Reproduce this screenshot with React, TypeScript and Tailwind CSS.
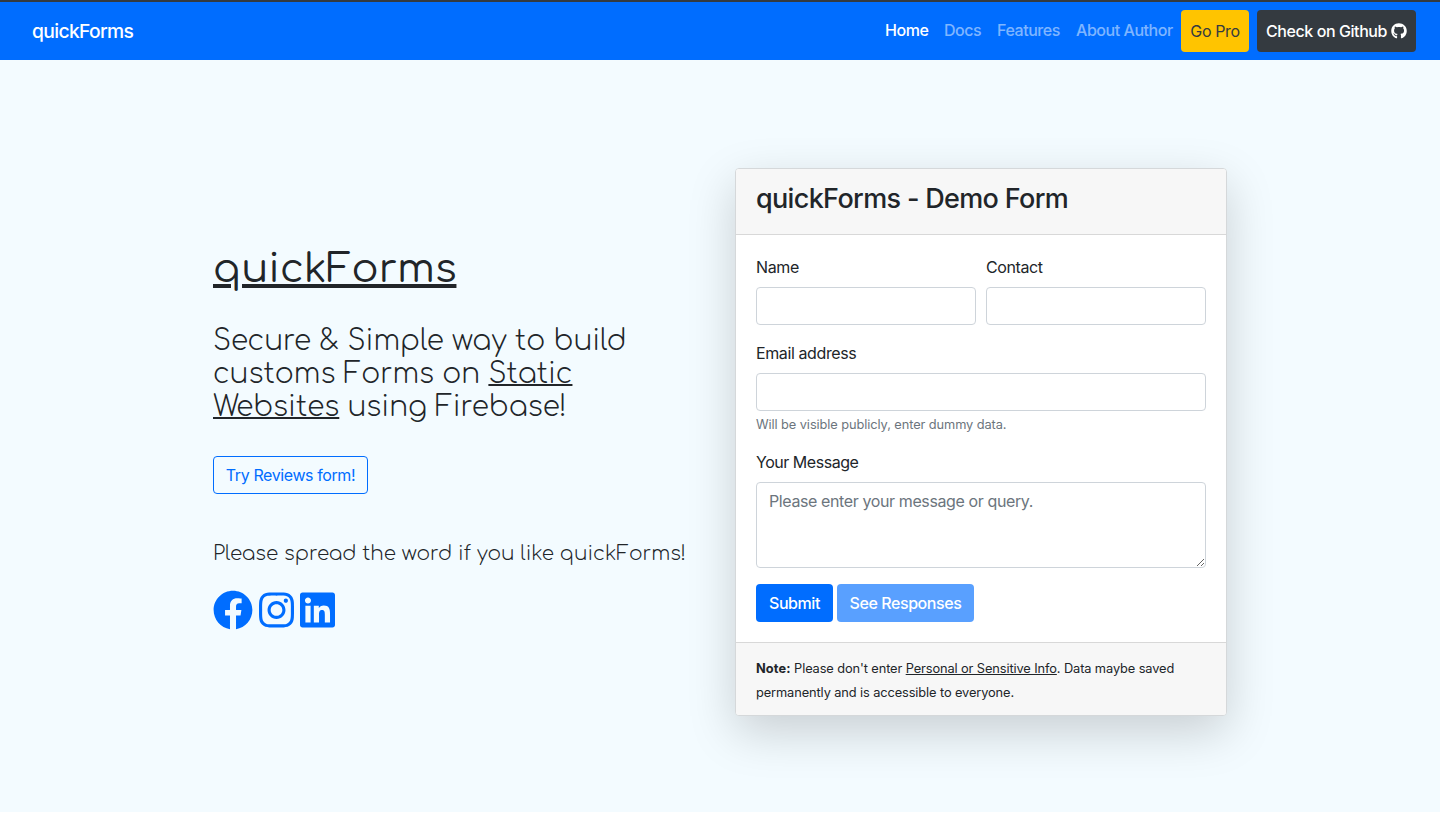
import { FaFacebook, FaGithub, FaInstagram, FaLinkedin } from "react-icons/fa";

const navLinks = [
  { label: "Home", style: "text-white font-medium w-[43px]" },
  { label: "Docs", style: "text-white/50 font-medium w-[37px]" },
  { label: "Features", style: "text-white/50 font-medium w-[63px]" },
  { label: "About Author", style: "text-white/50 font-medium w-[97px]" },
];

function Navbar() {
  return (
    <nav className="flex h-[60px] items-center justify-between border-t-2 border-[#343a40] bg-[#006dff] pl-8 pr-6">
      <a className="text-[19.3px] font-medium leading-[30px] tracking-[-0.65px] text-white">quickForms</a>
      <div className="flex items-center">
        <div className="mr-2 flex gap-4 pb-0.5 tracking-[-0.45px]">
          {navLinks.map((link) => (
            <a key={link.label} className={"whitespace-nowrap " + link.style}>
              {link.label}
            </a>
          ))}
        </div>
        <button className="mr-2 h-[42px] w-[68px] whitespace-nowrap rounded-[4px] bg-[#ffc400] text-[#343a40]">
          Go Pro
        </button>
        <button className="flex h-[42px] w-[159px] items-center justify-center gap-1 whitespace-nowrap rounded-[4px] bg-[#343a40] font-medium tracking-[-0.42px] text-white">
          Check on Github <FaGithub size={16} />
        </button>
      </div>
    </nav>
  );
}

function Intro() {
  return (
    <section className="w-[492px] pt-[185px] font-['Comfortaa',Quicksand,Lato,sans-serif] tracking-normal text-[#212529]">
      <h1 className="text-[40px] leading-[48px] underline decoration-4">quickForms</h1>
      <h2 className="mt-[32px] text-[28px] font-light leading-[33px]">
        Secure &amp; Simple way to build
        <br />
        customs Forms on <u className="decoration-2">Static</u>
        <br />
        <u className="decoration-2">Websites</u> using Firebase!
      </h2>
      <button className="mt-[32px] h-[38px] w-[155px] whitespace-nowrap rounded-[4px] border border-[#006dff] font-['Inter',sans-serif] text-[16px] tracking-[-0.4px] text-[#006dff]">
        Try Reviews form!
      </button>
      <p className="mt-[48px] whitespace-nowrap text-[20px] font-light leading-[24px]">
        Please spread the word if you like quickForms!
      </p>
      <div className="mt-[24px] flex text-[#006dff]">
        <FaFacebook className="h-10 w-10" />
        <FaInstagram className="ml-[6px] h-10 w-[35px]" />
        <FaLinkedin className="ml-[6px] h-10 w-[35px]" />
      </div>
    </section>
  );
}

function Field({ label }: { label: string }) {
  return (
    <label className="block flex-1">
      <span className="block leading-6">{label}</span>
      <input className="mt-2 block h-[38px] w-full rounded-[4px] border border-[#ced4da] bg-white px-3" />
    </label>
  );
}

function DemoForm() {
  return (
    <section className="h-[548px] w-[492px] overflow-hidden rounded-[4px] border border-[#d5d8da] bg-white text-[#212529] shadow-[0_16px_48px_rgba(0,0,0,0.175)]">
      <header className="h-[66px] border-b border-[#d8d8d8] bg-[#f7f7f7] px-5 pt-3">
        <h3 className="text-[27px] font-medium leading-[35px] tracking-[-0.66px]">quickForms - Demo Form</h3>
      </header>
      <div className="h-[407px] px-5 pt-5">
        <div className="flex gap-[10px]">
          <Field label="Name" />
          <Field label="Contact" />
        </div>
        <div className="mt-4">
          <Field label="Email address" />
          <small className="mt-1 block text-[12.8px] leading-[19px] tracking-[-0.08px] text-[#6c757d]">
            Will be visible publicly, enter dummy data.
          </small>
        </div>
        <label className="mt-4 block">
          <span className="block leading-6 tracking-[-0.47px]">Your Message</span>
          <textarea
            className="mt-2 block h-[86px] w-full resize rounded-[4px] border border-[#ced4da] px-3 py-[6px] leading-6 placeholder:text-[#6c757d]"
            placeholder="Please enter your message or query."
          />
        </label>
        <div className="mt-4 flex gap-1 font-medium tracking-[-0.42px] text-white">
          <button className="h-[38px] w-[77px] rounded-[4px] bg-[#006dff]">Submit</button>
          <button className="h-[38px] w-[137px] whitespace-nowrap rounded-[4px] bg-[#59a0ff]">See Responses</button>
        </div>
      </div>
      <footer className="h-[73px] border-t border-[#d8d8d8] bg-[#f7f7f7] px-5 pt-[14px] text-[12.8px] leading-6 tracking-[-0.1px]">
        <b className="tracking-[0.1px]">Note:</b> Please don't enter <u>Personal or Sensitive Info</u>. Data maybe saved
        <br />
        permanently and is accessible to everyone.
      </footer>
    </section>
  );
}

export default function App() {
  return (
    <div className="h-[823px] overflow-hidden bg-white font-['Inter',sans-serif] text-[16px] tracking-[-0.39px]">
      <Navbar />
      <main className="flex h-[752px] gap-[30px] bg-[#f3fbff] pl-[213px]">
        <Intro />
        <div className="pt-[108px]">
          <DemoForm />
        </div>
      </main>
    </div>
  );
}
